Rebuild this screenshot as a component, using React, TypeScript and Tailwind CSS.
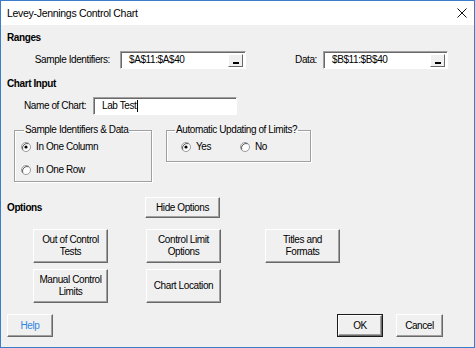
import React from "react";

const btnBase =
  "flex items-center justify-center text-center bg-[#f0f0f0] border-t border-l border-t-white border-l-white border-r border-b border-r-[#696969] border-b-[#696969] shadow-[inset_-1px_-1px_0_#a0a0a0] leading-[12px]";

function Btn({ children, className }: { children: React.ReactNode; className: string }) {
  return <div className={`${btnBase} ${className}`}>{children}</div>;
}

function RefInput({ value, className }: { value: string; className: string }) {
  return (
    <div
      className={`h-[18px] bg-white flex items-center border-t border-l border-t-[#a0a0a0] border-l-[#a0a0a0] border-r border-b border-r-white border-b-white shadow-[inset_1px_1px_0_#696969] pl-[8px] pr-[2px] ${className}`}
    >
      <span className="flex-1 leading-[12px]">{value}</span>
      <div className="w-[15px] h-[13px] bg-[#f0f0f0] border-t border-l border-t-white border-l-white border-r border-b border-r-[#696969] border-b-[#696969] flex items-end justify-center pb-[2px]">
        <div className="w-[6px] h-[2px] bg-black" />
      </div>
    </div>
  );
}

function Radio({ checked }: { checked: boolean }) {
  return (
    <svg width="10" height="10" viewBox="0 0 10 10" className="shrink-0">
      <circle cx="5" cy="5" r="4.5" fill="white" stroke="#9a9a9a" strokeWidth="1" />
      <path d="M1.8 7.6 A4.5 4.5 0 0 1 7.6 1.8" fill="none" stroke="#5a5a5a" strokeWidth="1" />
      {checked && <circle cx="5" cy="5" r="1.6" fill="#000" />}
    </svg>
  );
}

export default function App() {
  return (
    <div className="w-[475px] h-[348px] flex flex-col border border-[#3a7dc9] bg-[#f0f0f0] text-black text-[10px] tracking-[-0.4px] font-['Liberation_Sans',Arial,sans-serif]">
      <div className="h-[24px] bg-white flex items-center justify-between pl-[6px] pr-[6px] shrink-0">
        <span className="text-[10.5px] tracking-[-0.3px] leading-[12px]">Levey-Jennings Control Chart</span>
        <svg width="10" height="10" viewBox="0 0 10 10" className="mr-[1px]">
          <path d="M0.5 0.5 L9.5 9.5 M9.5 0.5 L0.5 9.5" stroke="#111" strokeWidth="1" />
        </svg>
      </div>
      <div className="flex-1 flex flex-col pl-[6px]">
        <div className="mt-[7px] h-[12px] leading-[12px] font-bold">Ranges</div>
        <div className="mt-[7px] flex items-center h-[18px]">
          <div className="w-[113px] text-right pr-[10px] leading-[12px]">Sample Identifiers:</div>
          <RefInput value="$A$11:$A$40" className="w-[126px]" />
          <div className="w-[77px] text-right pr-[6px] leading-[12px]">Data:</div>
          <RefInput value="$B$11:$B$40" className="w-[125px]" />
        </div>
        <div className="mt-[9px] h-[12px] leading-[12px] font-bold">Chart Input</div>
        <div className="mt-[7px] flex items-center h-[18px]">
          <div className="ml-[17px] w-[69px] leading-[12px]">Name of Chart:</div>
          <div className="w-[144px] h-[18px] bg-white flex items-center border-t border-l border-t-[#a0a0a0] border-l-[#a0a0a0] border-r border-b border-r-white border-b-white shadow-[inset_1px_1px_0_#696969] pl-[8px]">
            <span className="leading-[12px]">Lab Test</span>
            <span className="w-[1px] h-[12px] bg-black ml-[1px]" />
          </div>
        </div>
        <div className="mt-[9px] flex items-start">
          <fieldset className="ml-[7px] w-[138px] h-[58px] border border-[#a0a0a0] shadow-[inset_1px_1px_0_#fff,1px_1px_0_#fff]">
            <legend className="ml-[9px] px-[1px] leading-[12px]">Sample Identifiers &amp; Data</legend>
            <div className="flex flex-col pl-[6px]">
              <div className="mt-[5px] h-[12px] flex items-center gap-[5px] leading-[12px]">
                <Radio checked />
                <span>In One Column</span>
              </div>
              <div className="mt-[11px] h-[12px] flex items-center gap-[5px] leading-[12px]">
                <Radio checked={false} />
                <span>In One Row</span>
              </div>
            </div>
          </fieldset>
          <fieldset className="ml-[14px] w-[145px] h-[38px] border border-[#a0a0a0] shadow-[inset_1px_1px_0_#fff,1px_1px_0_#fff]">
            <legend className="ml-[8px] px-[1px] leading-[12px]">Automatic Updating of Limits?</legend>
            <div className="flex pl-[14px] mt-[5px] h-[12px] items-center leading-[12px]">
              <div className="w-[59px] flex items-center gap-[5px]">
                <Radio checked />
                <span>Yes</span>
              </div>
              <div className="flex items-center gap-[5px]">
                <Radio checked={false} />
                <span>No</span>
              </div>
            </div>
          </fieldset>
        </div>
        <div className="mt-[15px] flex items-center h-[21px]">
          <div className="w-[138px] font-bold leading-[12px]">Options</div>
          <Btn className="w-[75px] h-[21px]">Hide Options</Btn>
        </div>
        <div className="mt-[11px] flex">
          <Btn className="ml-[26px] w-[75px] h-[34px]">
            Out of Control
            <br />
            Tests
          </Btn>
          <Btn className="ml-[38px] w-[75px] h-[34px]">
            Control Limit
            <br />
            Options
          </Btn>
          <Btn className="ml-[44px] w-[75px] h-[34px]">
            Titles and
            <br />
            Formats
          </Btn>
        </div>
        <div className="mt-[6px] flex">
          <Btn className="ml-[26px] w-[75px] h-[34px]">
            Manual Control
            <br />
            Limits
          </Btn>
          <Btn className="ml-[38px] w-[75px] h-[34px]">Chart Location</Btn>
        </div>
        <div className="mt-[11px] flex">
          <Btn className="w-[46px] h-[23px] text-[#2f86e0]">Help</Btn>
          <div className="ml-[284px] w-[46px] h-[23px] border border-[#1a1a1a]">
            <Btn className="w-full h-full">OK</Btn>
          </div>
          <Btn className="ml-[13px] w-[47px] h-[23px]">Cancel</Btn>
        </div>
      </div>
    </div>
  );
}
